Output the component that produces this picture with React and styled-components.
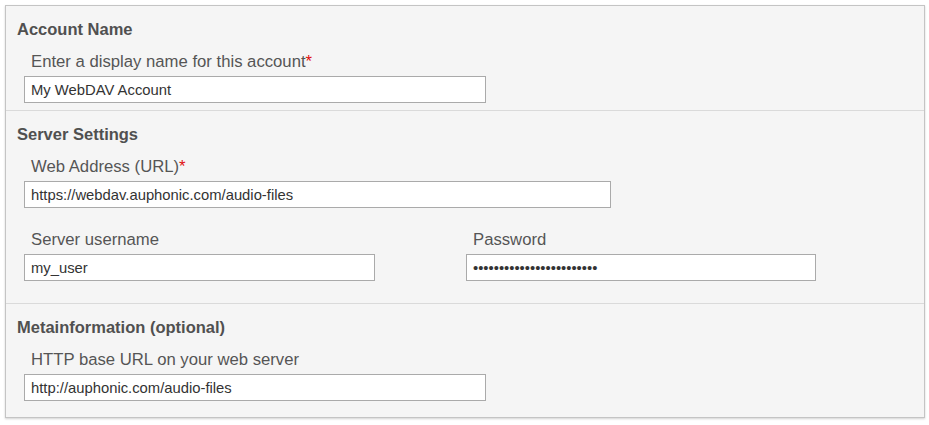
import styled, { createGlobalStyle } from "styled-components"

const GlobalStyle = createGlobalStyle`
  body {
    margin: 0;
    background: #ffffff;
    font-family: "Liberation Sans", Arial, sans-serif;
  }
`

const Page = styled.div`
  padding: 5px 4px 7px 5px;
`

const Panel = styled.div`
  background: #f5f5f5;
  border: 1px solid #c4c4c4;
  box-shadow: 0 1px 2px rgba(0, 0, 0, 0.18);
`

const Section = styled.fieldset`
  margin: 0;
  padding: 12px 11px ${(p) => p.$bottom}px 11px;
  border: none;
  border-top: ${(p) => (p.$first ? "none" : "1px solid #dadada")};
`

const Heading = styled.h3`
  margin: 0 0 11px 0;
  font-size: 16.5px;
  line-height: 22px;
  font-weight: bold;
  color: #505050;
`

const Row = styled.div`
  display: grid;
  grid-template-columns: 442px 350px;
`

const Field = styled.div`
  display: flex;
  flex-direction: column;
  padding-left: 7px;
  margin-bottom: ${(p) => p.$gap || 0}px;
`

const Label = styled.label`
  font-size: 16.7px;
  line-height: 22px;
  color: #555555;
  padding-left: 7px;
  margin-bottom: 3px;
`

const Required = styled.span`
  color: #e01010;
`

const Input = styled.input`
  box-sizing: border-box;
  width: ${(p) => p.$width}px;
  height: 27px;
  margin: 0;
  padding: 0 6px;
  border: 1px solid #aaaaaa;
  border-radius: 0;
  background: #ffffff;
  font-family: "Liberation Sans", Arial, sans-serif;
  font-size: 14.8px;
  color: #333333;
  outline: none;
`

const App = () => {
  return (
    <Page>
      <GlobalStyle />
      <Panel>
        <Section $first $bottom={7}>
          <Heading>Account Name</Heading>
          <Field>
            <Label>
              Enter a display name for this account<Required>*</Required>
            </Label>
            <Input $width={462} defaultValue="My WebDAV Account" />
          </Field>
        </Section>
        <Section $bottom={22}>
          <Heading>Server Settings</Heading>
          <Field $gap={21}>
            <Label>
              Web Address (URL)<Required>*</Required>
            </Label>
            <Input $width={587} defaultValue="https://webdav.auphonic.com/audio-files" />
          </Field>
          <Row>
            <Field>
              <Label>Server username</Label>
              <Input $width={351} defaultValue="my_user" />
            </Field>
            <Field>
              <Label>Password</Label>
              <Input $width={350} type="password" defaultValue="abcdefghijklmnopqrstuvwx" />
            </Field>
          </Row>
        </Section>
        <Section $bottom={16}>
          <Heading>Metainformation (optional)</Heading>
          <Field>
            <Label>HTTP base URL on your web server</Label>
            <Input $width={462} defaultValue="http://auphonic.com/audio-files" />
          </Field>
        </Section>
      </Panel>
    </Page>
  )
}

export default App
